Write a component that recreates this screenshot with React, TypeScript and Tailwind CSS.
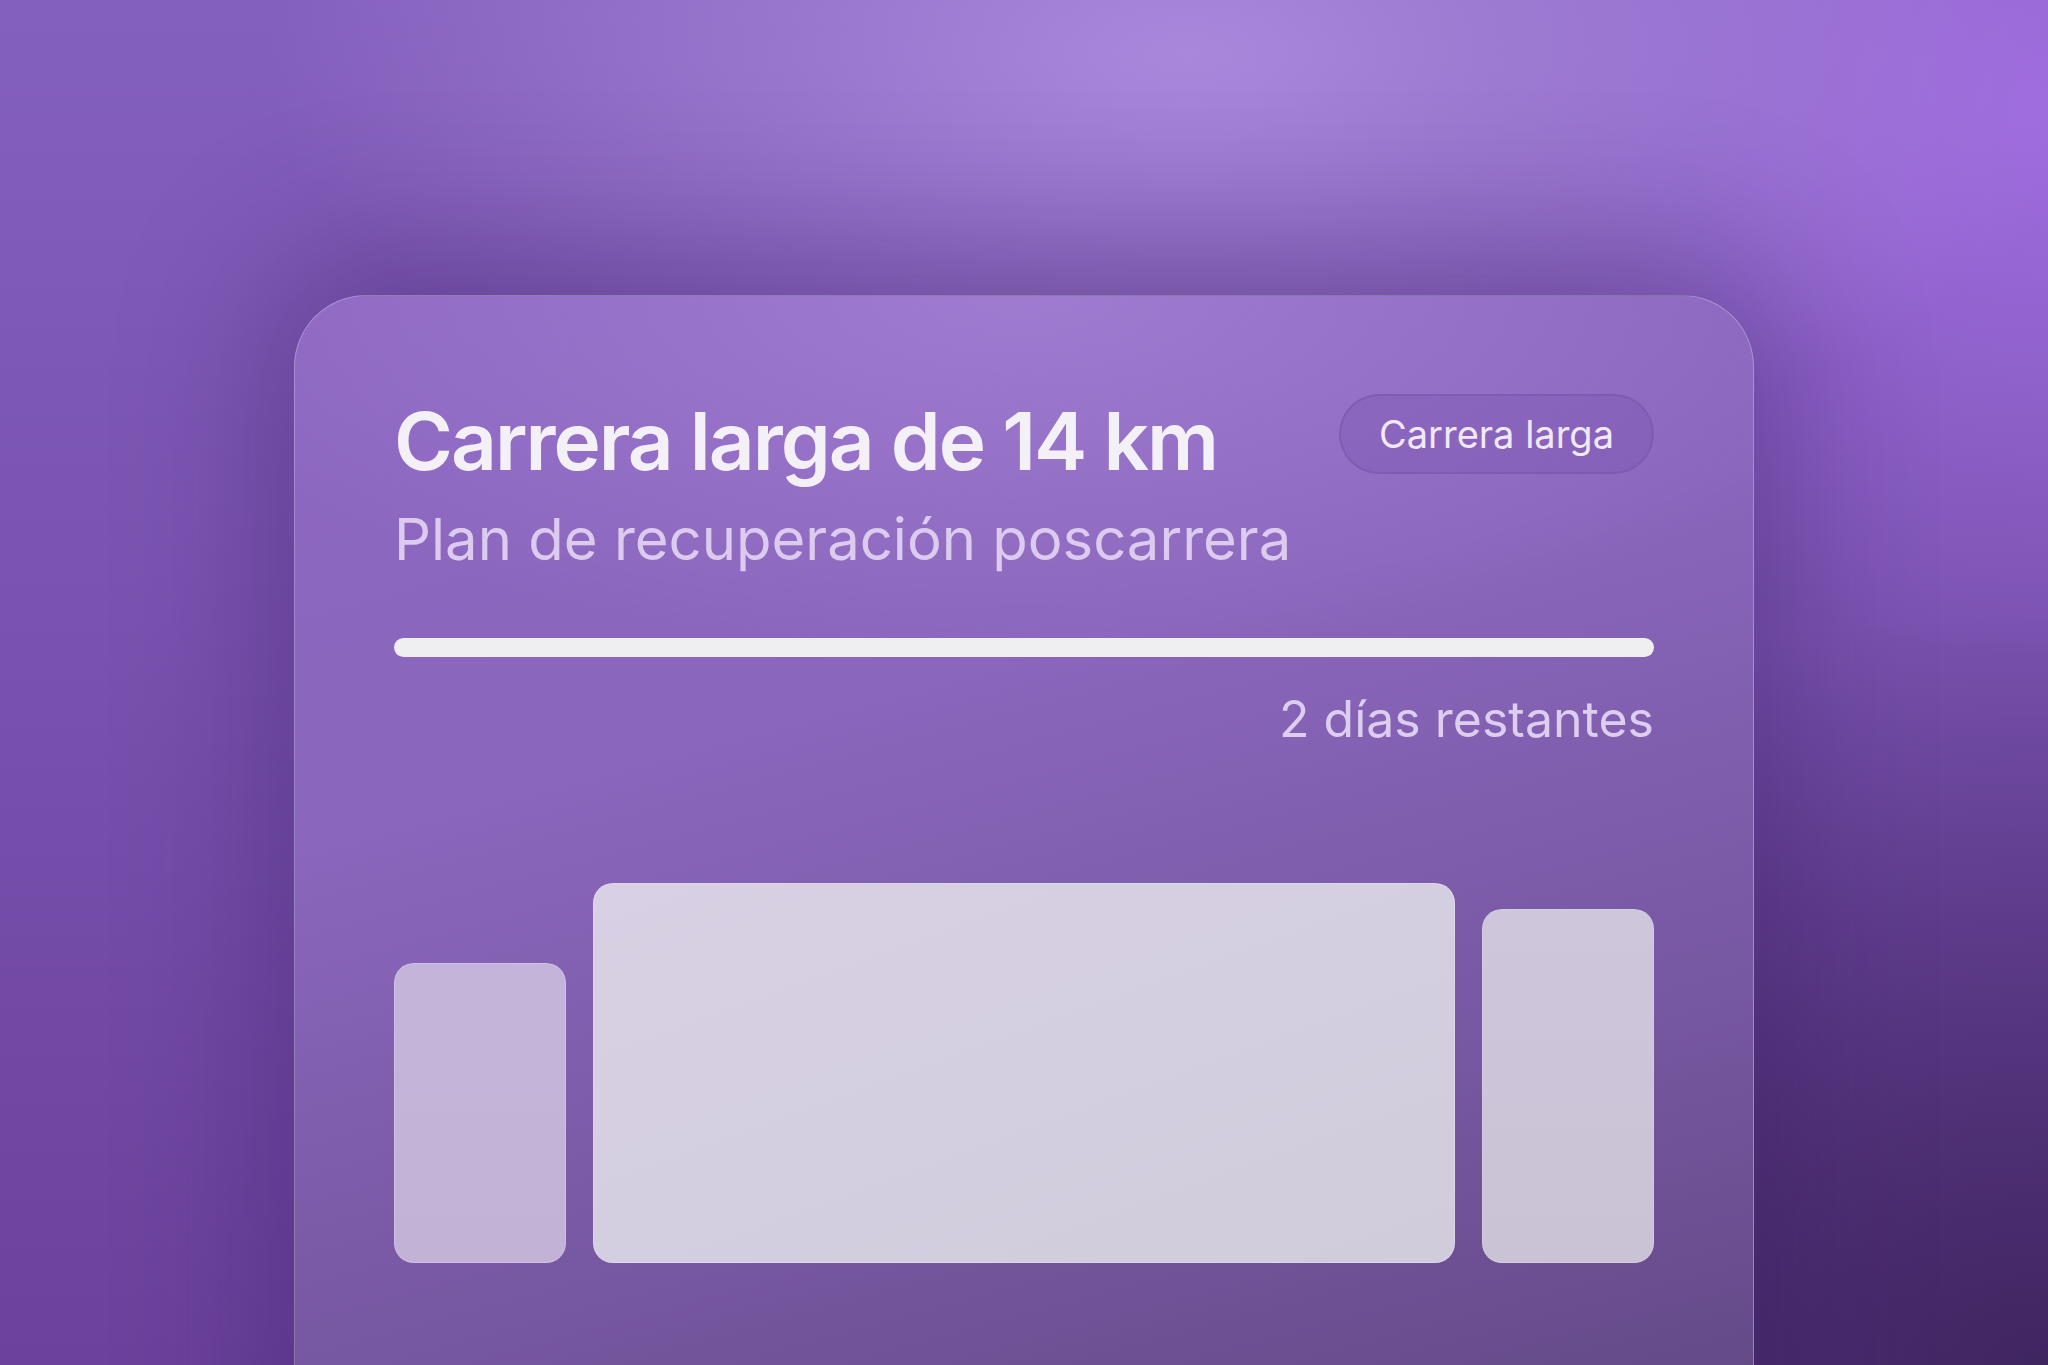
import React from "react";

const FONT = { fontFamily: "Inter, 'Noto Sans', sans-serif" };

export default function App() {
  return (
    <main
      style={FONT}
      className="h-[1365px] w-full overflow-hidden bg-[radial-gradient(ellipse_45%_32%_at_58%_4%,#a988dc_0%,rgba(165,130,218,0)_100%),radial-gradient(ellipse_30%_40%_at_100%_8%,#9f6be0_0%,rgba(159,107,224,0)_100%),radial-gradient(ellipse_55%_55%_at_100%_100%,#3f2560_0%,rgba(63,37,96,0)_100%),linear-gradient(180deg,#8460bd_0%,#7a52b0_45%,#6a419c_100%)] pt-[295px]"
    >
      <div className="mx-auto h-[1200px] w-[1460px] rounded-t-[72px] border border-white/25 bg-[radial-gradient(ellipse_60%_30%_at_50%_0%,rgba(175,140,222,0.55)_0%,rgba(175,140,222,0)_100%),linear-gradient(165deg,#8e67c2_0%,#8a66bc_35%,#7657a1_68%,#5f4680_100%)] px-[99px] shadow-[0_-20px_150px_20px_rgba(48,20,86,0.34)]">
        <header className="flex items-start justify-between pt-[98px]">
          <div className="pt-[7px]">
            <h1 className="text-[80px] font-semibold leading-none tracking-[-0.025em] text-[#f3f0f8]">
              Carrera larga de 14 km
            </h1>
            <p className="mt-[29px] text-[58px] leading-none text-[#dccbee]">
              Plan de recuperación poscarrera
            </p>
          </div>
          <span className="flex h-[80px] items-center rounded-full border-2 border-[#7b55ad]/60 bg-[#7a52b0]/35 px-[38px] text-[38px] leading-none text-[#f1e9f9]">
            Carrera larga
          </span>
        </header>

        <div className="mt-[70px] h-[19px] w-full rounded-full bg-[#efeef1]" />

        <p className="mt-[37px] text-right text-[50px] leading-none text-[#ddcdef]">
          2 días restantes
        </p>

        <div className="mt-[139px] flex h-[380px] items-end gap-[27px]">
          <div className="h-[300px] w-[172px] rounded-[20px] border border-[#d8c9ec]/60 bg-[linear-gradient(180deg,#c3b5d9_0%,#c2b3d6_100%)]" />
          <div className="h-[380px] flex-1 rounded-[20px] border border-[#e6dcf3]/60 bg-[linear-gradient(160deg,#d8d0e4_0%,#d4cfe0_50%,#d1ccdb_100%)]" />
          <div className="h-[354px] w-[172px] rounded-[20px] border border-[#ddd3ea]/50 bg-[linear-gradient(180deg,#cec6db_0%,#cac3d5_100%)]" />
        </div>
      </div>
    </main>
  );
}
